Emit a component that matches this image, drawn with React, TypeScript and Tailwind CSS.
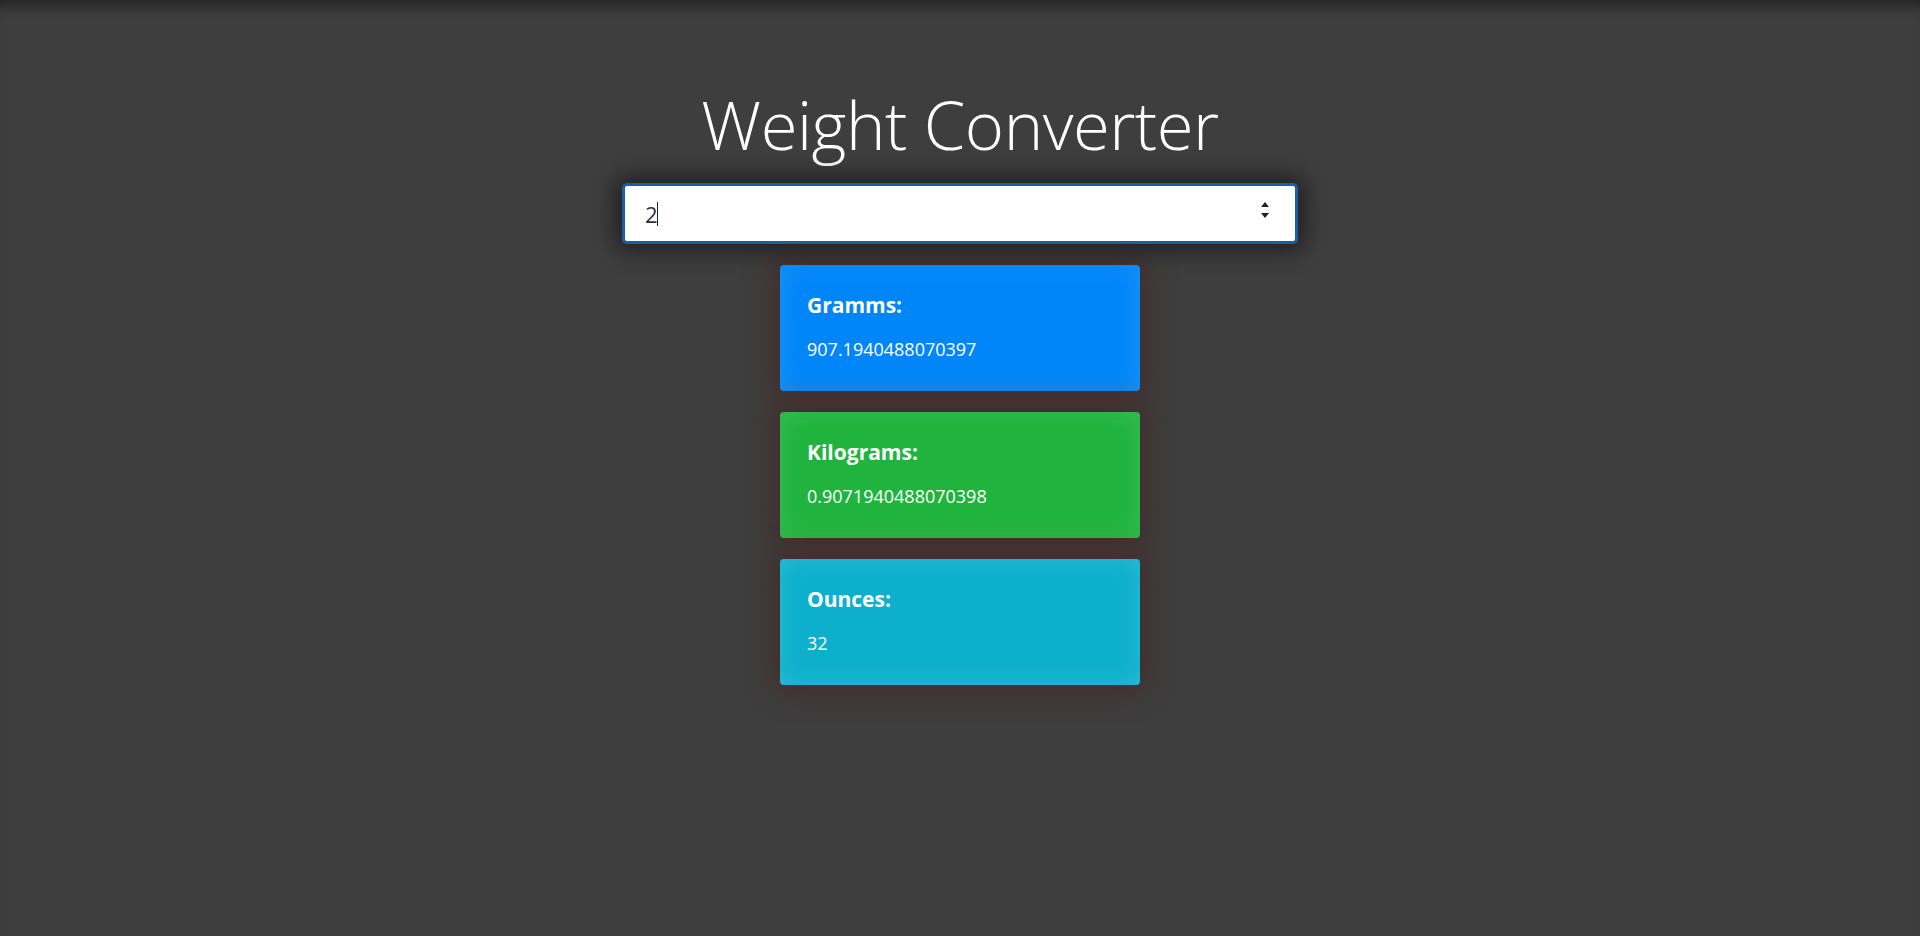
import { useState } from "react";

const cards = [
  { key: "g", label: "Gramms:", bg: "bg-[#0086f8]", conv: (n: number) => n / 0.0022046 },
  { key: "kg", label: "Kilograms:", bg: "bg-[#20b43e]", conv: (n: number) => n / 2.2046 },
  { key: "oz", label: "Ounces:", bg: "bg-[#0db0cc]", conv: (n: number) => n * 16 },
];

const App = () => {
  const [lbs, setLbs] = useState("2");
  const n = parseFloat(lbs) || 0;

  return (
    <div className="min-h-[936px] w-full bg-[#3e3e3e] shadow-[inset_0_14px_14px_-8px_rgba(0,0,0,0.45)] font-['Open_Sans','Liberation_Sans',sans-serif] flex flex-col items-center">
      <h1 className="mt-[82px] text-[67px] leading-[84px] font-light text-white tracking-[-0.5px]">
        Weight Converter
      </h1>
      <div className="relative mt-[17px]">
        <input
          type="text"
          value={lbs}
          onChange={(e) => setLbs(e.target.value)}
          className="w-[676px] h-[61px] rounded-[5px] border-[3px] border-[#1a5ea6] bg-white px-[20px] text-[22px] text-[#333] outline-none shadow-[0_0_22px_8px_rgba(0,0,0,0.45)]"
        />
        {/* caret */}
        <span className="absolute left-[35px] top-[19px] h-[24px] w-px bg-[#222]" />
        {/* spinner */}
        <span className="absolute right-[29px] top-[19px] flex flex-col items-center gap-[6px]">
          <svg width="8" height="5" viewBox="0 0 8 5"><path d="M4 0L8 5H0z" fill="#222" /></svg>
          <svg width="8" height="5" viewBox="0 0 8 5"><path d="M0 0H8L4 5z" fill="#222" /></svg>
        </span>
      </div>
      <div className="mt-[21px] flex flex-col gap-[21px]">
        {cards.map((c) => (
          <div
            key={c.key}
            className={`${c.bg} w-[360px] h-[126px] rounded-[4px] px-[27px] pt-[27px] text-white shadow-[inset_0_0_24px_rgba(255,255,255,0.12),0_0_28px_6px_rgba(75,30,30,0.55)]`}
          >
            <h5 className="text-[21px] leading-[26px] font-bold">{c.label}</h5>
            <p className="mt-[20px] text-[18px] leading-[22px]">{c.conv(n)}</p>
          </div>
        ))}
      </div>
    </div>
  );
};

export default App;
